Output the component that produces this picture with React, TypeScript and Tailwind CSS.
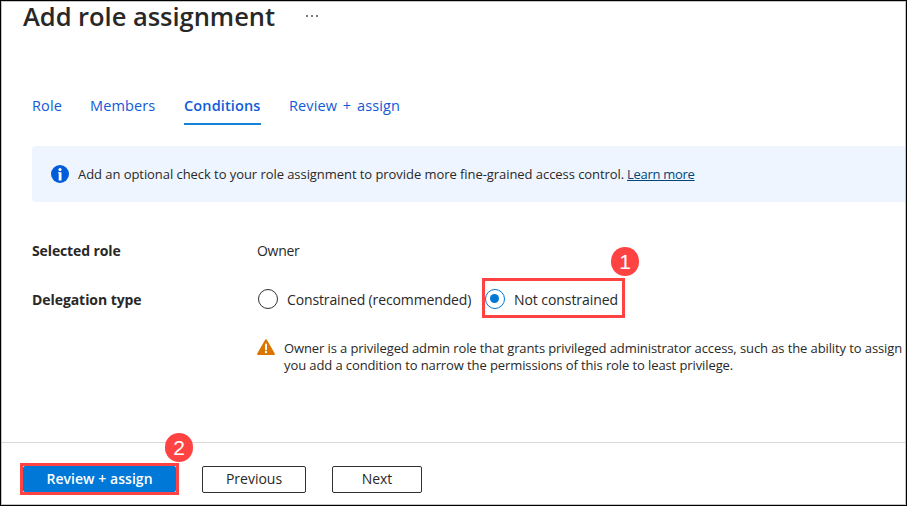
import type { ReactNode } from "react";

function Badge({ children, place }: { children: ReactNode; place: string }) {
  return (
    <span
      className={`absolute ${place} flex h-[28.6px] w-[28.6px] items-center justify-center rounded-full bg-[#ff4343] font-['Liberation_Sans',sans-serif] text-[21px] leading-none text-white`}
    >
      {children}
    </span>
  );
}

function Tab({ label, width, active }: { label: string; width: string; active?: boolean }) {
  return (
    <div
      className={`h-[31px] ${width} border-b-2 text-[14.5px] leading-[24px] tracking-[0.13px] ${
        active ? "border-[#1482d9] font-semibold text-[#0f5bd8]" : "border-transparent text-[#1259d6]"
      }`}
    >
      {label}
    </div>
  );
}

export default function App() {
  return (
    <div className="h-[506px] w-[907px] border border-black bg-white font-['Open_Sans','Noto_Sans',sans-serif] whitespace-nowrap text-[#292827]">
      <div className="flex h-full flex-col border border-[#c4c4c4]">
        <header className="flex h-[92px] shrink-0 items-start pl-[21px]">
          <h1 className="h-9 w-[283px] text-[25.5px] leading-[28px] font-semibold tracking-[-0.03px]">Add role assignment</h1>
          <div className="mt-[13px] flex gap-[3px]">
            <i className="size-[2px] bg-[#777]" />
            <i className="size-[2px] bg-[#777]" />
            <i className="size-[2px] bg-[#777]" />
          </div>
        </header>

        <nav className="flex h-[52px] shrink-0 gap-7 pl-[30px]">
          <Tab label="Role" width="w-[30px]" />
          <Tab label="Members" width="w-[66px]" />
          <Tab label="Conditions" width="w-[77px]" active />
          <Tab label="Review + assign" width="w-[111px] [word-spacing:1.8px]" />
        </nav>

        <section className="ml-[30px] flex h-[56px] shrink-0 items-center rounded-l-sm bg-[#eff5ff] pl-[19px] text-[13px]">
          <svg className="mr-[9px] size-[18px] shrink-0" viewBox="0 0 18 18">
            <circle cx="9" cy="9" r="9" fill="#015cda" />
            <circle cx="9" cy="4.6" r="1.6" fill="#fff" />
            <path d="M7 7.2h3.5v8.3H7.7V8.2H7z" fill="#fff" />
          </svg>
          <span className="w-[549px] pt-[2px] tracking-[-0.06px]">
            Add an optional check to your role assignment to provide more fine-grained access control.
          </span>
          <a className="pt-[2px] tracking-[-0.28px] text-[#004578] underline underline-offset-1">Learn more</a>
        </section>

        <main className="flex h-[240px] shrink-0 flex-col pt-[36px] pl-[30px] text-[14px] tracking-[-0.13px]">
          <div className="flex h-[24px] items-center">
            <span className="w-[225px] font-bold tracking-[-0.12px]">Selected role</span>
            <span className="tracking-[-0.3px]">Owner</span>
          </div>
          <div className="mt-[16px] flex h-[40px] items-center">
            <span className="w-[225px] pt-[3px] font-bold tracking-[-0.07px]">Delegation type</span>
            <span className="mt-[2px] mr-[9px] ml-px size-[20px] rounded-full border border-[#323130]" />
            <span className="w-[195px] pt-[3px]">Constrained (recommended)</span>
            <div className="relative flex h-[40px] w-[143px] items-center border-[3px] border-[#ff4343]">
              <span className="mt-[2px] flex size-[20px] shrink-0 items-start justify-start rounded-full border border-[#0078d4] pt-[4px] pl-[4px]">
                <span className="size-[9px] rounded-full bg-[#0078d4]" />
              </span>
              <span className="ml-[9px] pt-[3px] tracking-[-0.07px]">Not constrained</span>
              <Badge place="top-[-33.7px] left-[125.7px]">1</Badge>
            </div>
          </div>
          <div className="mt-[21px] ml-[225px] flex text-[13px] leading-[17px] tracking-[-0.1px]">
            <svg className="mr-[9px] h-[17px] w-[18px] shrink-0" viewBox="0 0 18 17">
              <path d="M9 1.3 16.9 15H1.1z" fill="#db7500" stroke="#db7500" strokeWidth="2" strokeLinejoin="round" />
              <path d="M9 5.6v4.6" stroke="#fff" strokeWidth="2" strokeLinecap="round" />
              <circle cx="9" cy="13" r="1.2" fill="#fff" />
            </svg>
            <p className="pt-px">
              Owner is a privileged admin role that grants privileged administrator access, such as the ability to assign
              <br />
              you add a condition to narrow the permissions of this role to least privilege.
            </p>
          </div>
        </main>

        <footer className="flex flex-1 border-t border-[#d8d8d8] pt-[20px] pl-[18px] text-[14px]">
          <div className="relative h-[32px] w-[159px] border-[3px] border-[#ff4343] bg-white">
            <button className="block h-full w-full rounded-[2px] bg-[#0078d7] pb-px font-semibold tracking-[0.05px] text-white">
              Review + assign
            </button>
            <Badge place="top-[-32.7px] left-[141.7px]">2</Badge>
          </div>
          <button className="mt-[3px] ml-[23px] h-[27px] w-[104px] rounded-[2px] border border-[#323130] pb-[3px]">Previous</button>
          <button className="mt-[3px] ml-[26px] h-[27px] w-[90px] rounded-[2px] border border-[#323130] pb-[3px]">Next</button>
        </footer>
      </div>
    </div>
  );
}
